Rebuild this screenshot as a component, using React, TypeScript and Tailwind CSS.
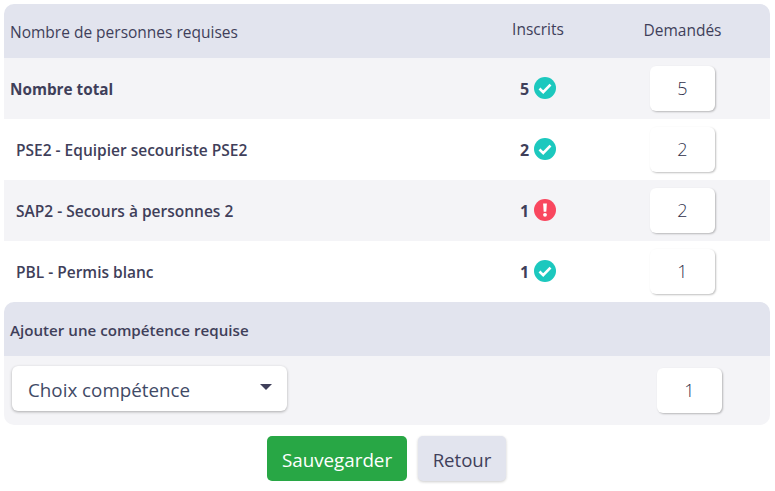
const ink = "text-[#3f3f5a]";

function Check() {
  return (
    <svg viewBox="0 0 512 512" className="w-[22px] h-[22px]">
      <circle cx="256" cy="256" r="256" fill="#1cc8be" />
      <path d="M128 268l86 84 170-176" fill="none" stroke="#fff" strokeWidth="62" strokeLinejoin="miter" />
    </svg>
  );
}

function Alert() {
  return (
    <svg viewBox="0 0 512 512" className="w-[22px] h-[22px]">
      <circle cx="256" cy="256" r="256" fill="#f9475f" />
      <path d="M212 104h88l-14 190h-60z" fill="#fff" />
      <circle cx="256" cy="368" r="44" fill="#fff" />
    </svg>
  );
}

function Box({ value }: { value: string }) {
  return (
    <div className="w-[65px] h-[45px] bg-white rounded-[6px] shadow-[1px_1px_2px_rgba(0,0,0,0.25)] flex items-center justify-center text-[18px] font-light text-[#2f2f4a]">
      {value}
    </div>
  );
}

function Row({ label, count, ok, value, bg, bold }: { label: string; count: string; ok: boolean; value: string; bg: string; bold?: boolean }) {
  return (
    <div className={`grid grid-cols-[472px_124px_1fr] items-center h-[61px] ${bg}`}>
      <div className={bold ? "pl-[6px] pt-[1px] font-bold text-[15.3px]" : "pl-[12px] pt-[2px] font-[550] text-[15.5px]"}>{label}</div>
      <div className="flex items-center justify-center gap-[5px] font-bold text-[16px] -mt-[2px]">
        <span className="pt-[2px]">{count}</span>
        {ok ? <Check /> : <Alert />}
      </div>
      <div className="flex pl-[50px]">
        <Box value={value} />
      </div>
    </div>
  );
}

export default function App() {
  return (
    <div className={`w-[775px] h-[491px] bg-white p-[4px] pr-[5px] ${ink}`} style={{ fontFamily: '"Open Sans", "Noto Sans", sans-serif' }}>
      <div className="rounded-[10px] overflow-hidden">
        <div className="grid grid-cols-[472px_124px_1fr] items-center h-[54px] bg-[#e2e4ee] text-[15.5px] font-medium">
          <div className="pl-[6px] pt-[3px]">Nombre de personnes requises</div>
          <div className="text-center -mt-[2px]">Inscrits</div>
          <div className="pl-[50px]"><div className="w-[65px] flex justify-center whitespace-nowrap">Demandés</div></div>
        </div>
        <Row label="Nombre total" count="5" ok value="5" bg="bg-[#f4f4f7]" bold />
        <Row label="PSE2 - Equipier secouriste PSE2" count="2" ok value="2" bg="bg-white" />
        <Row label="SAP2 - Secours à personnes 2" count="1" ok={false} value="2" bg="bg-[#f4f4f7]" />
        <Row label="PBL - Permis blanc" count="1" ok value="1" bg="bg-white" />
      </div>
      <div className="rounded-[10px] overflow-hidden">
        <div className="flex items-center h-[54px] bg-[#e2e4ee] pl-[6px] pt-[3px] text-[15.15px] font-[550]">Ajouter une compétence requise</div>
        <div className="flex items-center justify-between h-[69px] bg-[#f4f4f7] pl-[8px] pr-[48px]">
          <div className="w-[275px] h-[45px] -mt-[4px] bg-white rounded-[6px] shadow-[0_1px_3px_rgba(0,0,0,0.3)] flex items-center justify-between pl-[16px] pr-[15px] text-[18.8px] text-[#3f4a66]">
            <span className="pt-[3px]">Choix compétence</span>
            <span className="w-0 h-0 border-x-[6px] border-x-transparent border-t-[6px] border-t-[#3f3f5a] -mt-[4px]" />
          </div>
          <Box value="1" />
        </div>
      </div>
      <div className="flex justify-center gap-[11px] mt-[11px] pr-[1px]">
        <button className="w-[140px] h-[45px] pt-[3px] rounded-[5px] bg-[#28a745] text-white text-[18.8px]">Sauvegarder</button>
        <button className="w-[88px] h-[45px] pt-[2px] rounded-[5px] bg-[#e2e4ee] shadow-[0_1px_3px_rgba(0,0,0,0.2)] text-[18.6px] text-[#3f3f5a]">Retour</button>
      </div>
    </div>
  );
}
